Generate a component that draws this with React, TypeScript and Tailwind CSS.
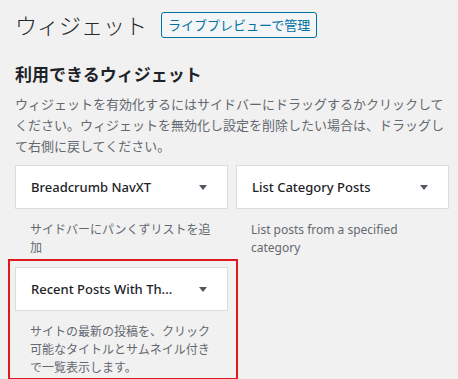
const jp = "font-['Noto_Sans','Noto_Sans_CJK_JP',sans-serif]"

type Widget = {
  title: string
  desc: string
  marked?: boolean
}

const widgets: Widget[] = [
  { title: "Breadcrumb NavXT", desc: "サイドバーにパンくずリストを追加" },
  { title: "List Category Posts", desc: "List posts from a specified category" },
  { title: "Recent Posts With Th...", desc: "サイトの最新の投稿を、クリック可能なタイトルとサムネイル付きで一覧表示します。", marked: true },
]

function Arrow() {
  return (
    <svg width="8" height="5" viewBox="0 0 8 5" className="shrink-0">
      <path d="M0 0h8L4 5z" fill="#50575e" />
    </svg>
  )
}

function WidgetCell({ widget }: { widget: Widget }) {
  return (
    <div className="relative">
      {/* annotation frame */}
      {widget.marked && (
        <div className="absolute left-[-7px] right-[-10px] top-[-8px] bottom-[-3px] border-2 border-[#e0191f] pointer-events-none" />
      )}
      <div className="h-[44px] bg-white border border-[#dcdcde] flex items-center justify-between pl-[15px] pr-[20px]">
        <span className="text-[13px] font-medium text-[#1d2327] leading-none">{widget.title}</span>
        <Arrow />
      </div>
      <p className="mt-[12px] px-[15px] text-[12px] leading-[18px] text-[#646970]">{widget.desc}</p>
    </div>
  )
}

export default function App() {
  return (
    <div className={`${jp} min-h-[379px] bg-[#f1f1f1] pl-[15px] pr-[9px] pt-[12px] overflow-hidden`}>
      <div className="flex items-center gap-[14px] h-[26px]">
        <h1 className="text-[22px] font-light text-[#23282d] leading-none">ウィジェット</h1>
        <button className="h-[26px] px-[6px] border border-[#0071a1] rounded-[3px] bg-[#f3f5f6] text-[13px] text-[#0071a1] leading-none">
          ライブプレビューで管理
        </button>
      </div>

      <h2 className="mt-[28px] text-[17px] font-bold text-[#1d2327] leading-[18px]">利用できるウィジェット</h2>
      <p className="mt-[10px] text-[13px] leading-[21px] text-[#646970] whitespace-nowrap">
        ウィジェットを有効化するにはサイドバーにドラッグするかクリックして
        <br />
        ください。ウィジェットを無効化し設定を削除したい場合は、ドラッグし
        <br />
        て右側に戻してください。
      </p>

      <div className="mt-[8px] grid grid-cols-2 gap-x-[8px] gap-y-[10px]">
        {widgets.map((w) => (
          <WidgetCell key={w.title} widget={w} />
        ))}
      </div>
    </div>
  )
}
